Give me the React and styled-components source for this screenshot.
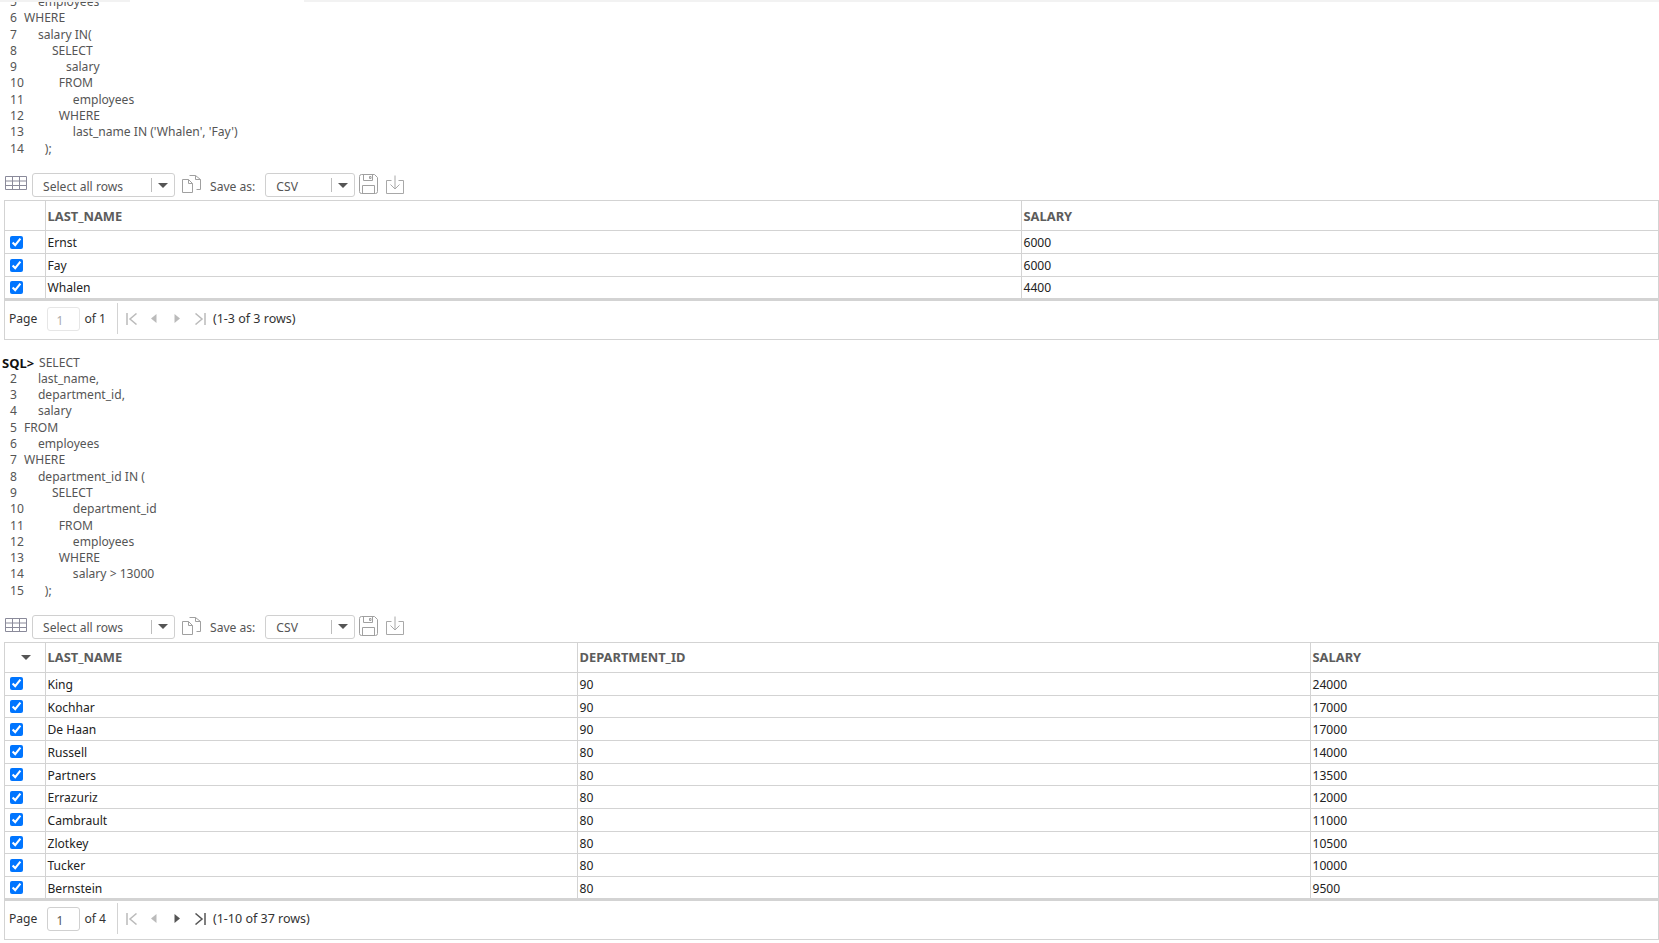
import React from "react";
import styled, { createGlobalStyle } from "styled-components";

const Global = createGlobalStyle`
html, body { margin:0; padding:0; background:#fff; overflow:hidden; }
body { font-family:"Noto Sans","Open Sans",sans-serif; font-size:12px; color:#222; }
`;

const Page = styled.div`
  position:relative;
  width:1659px;
  height:943px;
  overflow:hidden;
  box-sizing:border-box;
  &::before {
    content:"";
    position:absolute;
    top:0;
    left:0;
    right:0;
    height:2px;
    background:linear-gradient(90deg,#f2f2f2 130px,#fff 130px,#fff 304px,#f2f2f2 304px);
  }
`;
const Code = styled.div`
  margin-top:${(p) => p.$top}px;
  padding-left:10px;
  color:#555;
  font-size:12.1px;
  line-height:16.3px;
`;
const Line = styled.div`
  display:flex;
  white-space:pre;
  height:16.3px;
`;
const Prompt = styled.b`
  color:#111;
  font-size:13px;
  margin-left:-8px;
  width:37px;
`;
const Num = styled.span`
  margin-right:${(p) => 7 + p.$indent * 14}px;
`;
const Toolbar = styled.div`
  display:flex;
  align-items:center;
  height:24px;
  margin-top:${(p) => p.$top}px;
  padding-left:5px;
  color:#555;
  font-size:12.1px;
`;
const SelectBox = styled.div`
  display:flex;
  align-items:center;
  box-sizing:border-box;
  height:24px;
  width:${(p) => p.$w}px;
  margin-left:${(p) => p.$ml}px;
  padding-left:10px;
  border:1px solid #d0d0d0;
  border-radius:3px;
`;
const SelectText = styled.span`
  flex:1;
  padding-top:2px;
`;
const Caret = styled.span`
  display:flex;
  align-items:center;
  justify-content:center;
  width:22px;
  height:14px;
  border-left:1px solid #bdbdbd;
  &::after {
    content:"";
    border-left:5px solid transparent;
    border-right:5px solid transparent;
    border-top:5px solid #555;
  }
`;
const SaveLabel = styled.span`
  margin:0 10px 0 8px;
  padding-top:2px;
`;
const ToolIcon = styled.svg`
  display:block;
  margin-left:${(p) => p.$ml}px;
  margin-bottom:${(p) => p.$mb || 0}px;
  flex:none;
`;
const Grid = styled.div`
  margin:${(p) => p.$top}px 0 0 4px;
  border:1px solid #d3d3d3;
  box-sizing:border-box;
  width:1655px;
`;
const Table = styled.table`
  border-collapse:collapse;
  table-layout:fixed;
  width:100%;
  border-bottom:3px solid #d3d3d3;
`;
const Head = styled.th`
  height:29px;
  padding:0 0 0 2px;
  border-left:1px solid #d3d3d3;
  border-bottom:1px solid #d3d3d3;
  text-align:left;
  color:#5c5c5c;
  font-size:12.9px;
  font-weight:700;
  &:first-child { border-left:0; }
`;
const Cell = styled.td`
  height:22.7px;
  padding:1px 0 0 2px;
  box-sizing:border-box;
  border-left:1px solid #d3d3d3;
  border-bottom:1px solid #d3d3d3;
  color:#222;
  font-size:12.1px;
  line-height:17px;
  &:first-child { border-left:0; padding:0; text-align:center; }
  tr:last-child & { border-bottom:0; }
`;
const Check = styled.input`
  display:block;
  width:13px;
  height:13px;
  margin:0 0 0 5px;
  accent-color:#0075ff;
`;
const SortCaret = styled.span`
  display:block;
  width:0;
  margin-left:14px;
  border-left:5px solid transparent;
  border-right:5px solid transparent;
  border-top:5px solid #555;
`;
const Pager = styled.div`
  display:flex;
  align-items:center;
  box-sizing:border-box;
  height:38px;
  padding:0 0 2px 4px;
  color:#333;
  font-size:12.1px;
`;
const PageInput = styled.div`
  box-sizing:border-box;
  width:33px;
  height:24px;
  margin:0 4px 0 10px;
  padding:5px 0 0 8px;
  border:1px solid ${(p) => (p.$off ? "#e6e6e6" : "#d0d0d0")};
  border-radius:3px;
  color:${(p) => (p.$off ? "#aaa" : "#555")};
  font-size:12px;
  line-height:16px;
`;
const Sep = styled.span`
  width:1px;
  height:31px;
  margin:0 8px 0 ${(p) => p.$ml}px;
  background:#d3d3d3;
`;
const NavBtn = styled.svg`
  display:block;
  flex:none;
  margin-right:${(p) => p.$mr}px;
  fill:${(p) => (p.$line ? "none" : p.$on ? "#555" : "#bbb")};
  stroke:${(p) => (p.$on ? "#555" : "#bbb")};
`;
const RowsLabel = styled.span`
  font-size:12.5px;
`;

const Icons = {
  table: (
    <ToolIcon $ml={0} $mb={4} width="22" height="14" viewBox="0 0 22 14" fill="none" stroke="#8a8a9a">
      <path d="M.5.5h21v13H.5zM.5 5h21M.5 9.500h21M7.500.5v13M14.500.5v13" />
    </ToolIcon>
  ),
  copy: (
    <ToolIcon $ml={7} $mb={2} width="20" height="20" viewBox="0 0 20 20" fill="#fff" stroke="#a0a0a0">
      <path d="M7.500 1.500h6l5 4v10h-4M13.500 1.500v4h5" />
      <path d="M.5 5.500h6l4 4v9H.5zM6.500 5.500v4h4" />
    </ToolIcon>
  ),
  save: (
    <ToolIcon $ml={4} $mb={2} width="19" height="20" viewBox="0 0 19 20" fill="none" stroke="#a0a0a0">
      <path d="M.5 2.500a2 2 0 0 1 2-2h13l3 3v14a2 2 0 0 1-2 2h-14a2 2 0 0 1-2-2z" />
      <path d="M4.500.5v6h9v-6M10.500 2.500h1.500v2h-1.500zM3.500 19.500v-8h12v8" />
    </ToolIcon>
  ),
  download: (
    <ToolIcon $ml={8} $mb={2} width="18" height="19" viewBox="0 0 18 19" fill="none" stroke="#a8a8a8">
      <path d="M5.500 5.500H.5v13h17v-13h-5M9 .5v13M4.500 9.500 9 14l4.500-4.500" />
    </ToolIcon>
  ),
};

const First = ({ on }) => (
  <NavBtn $line $on={on} $mr={13} width="12" height="12" viewBox="0 0 12 12">
    <path d="M1 0v12M10.500 .5 4 6l6.500 5.500" strokeWidth="1.500" />
  </NavBtn>
);
const Prev = ({ on }) => (
  <NavBtn $on={on} $mr={17} width="6" height="9" viewBox="0 0 6 9">
    <path d="M5.500 0v9L0 4.500z" stroke="none" />
  </NavBtn>
);
const Next = ({ on }) => (
  <NavBtn $on={on} $mr={14} width="6" height="9" viewBox="0 0 6 9">
    <path d="M.5 0v9L6 4.500z" stroke="none" />
  </NavBtn>
);
const Last = ({ on }) => (
  <NavBtn $line $on={on} $mr={7} width="12" height="12" viewBox="0 0 12 12">
    <path d="M11 0v12M1.500 .5 8 6l-6.500 5.500" strokeWidth="1.500" />
  </NavBtn>
);

const Tools = ({ top }) => (
  <Toolbar $top={top}>
    {Icons.table}
    <SelectBox $w={143} $ml={5}>
      <SelectText>Select all rows</SelectText>
      <Caret />
    </SelectBox>
    {Icons.copy}
    <SaveLabel>Save as:</SaveLabel>
    <SelectBox $w={90} $ml={0}>
      <SelectText>CSV</SelectText>
      <Caret />
    </SelectBox>
    {Icons.save}
    {Icons.download}
  </Toolbar>
);

const query1 = [
  ["6", 0, "WHERE"],
  ["7", 1, "salary IN("],
  ["8", 2, "SELECT"],
  ["9", 3, "salary"],
  ["10", 2, "FROM"],
  ["11", 3, "employees"],
  ["12", 2, "WHERE"],
  ["13", 3, "last_name IN ('Whalen', 'Fay')"],
  ["14", 1, ");"],
];
const query2 = [
  ["2", 1, "last_name,"],
  ["3", 1, "department_id,"],
  ["4", 1, "salary"],
  ["5", 0, "FROM"],
  ["6", 1, "employees"],
  ["7", 0, "WHERE"],
  ["8", 1, "department_id IN ("],
  ["9", 2, "SELECT"],
  ["10", 3, "department_id"],
  ["11", 2, "FROM"],
  ["12", 3, "employees"],
  ["13", 2, "WHERE"],
  ["14", 3, "salary > 13000"],
  ["15", 1, ");"],
];
const rows1 = [
  ["Ernst", "6000"],
  ["Fay", "6000"],
  ["Whalen", "4400"],
];
const rows2 = [
  ["King", "90", "24000"],
  ["Kochhar", "90", "17000"],
  ["De Haan", "90", "17000"],
  ["Russell", "80", "14000"],
  ["Partners", "80", "13500"],
  ["Errazuriz", "80", "12000"],
  ["Cambrault", "80", "11000"],
  ["Zlotkey", "80", "10500"],
  ["Tucker", "80", "10000"],
  ["Bernstein", "80", "9500"],
];

const Result = ({ top, widths, heads, rows, sorted, page, pages, label }) => {
  const single = pages === 1;
  return (
    <Grid $top={top}>
      <Table>
        <colgroup>
          {widths.map((w, i) => (
            <col key={i} width={w} />
          ))}
        </colgroup>
        <thead>
          <tr>
            <Head>{sorted && <SortCaret />}</Head>
            {heads.map((h) => (
              <Head key={h}>{h}</Head>
            ))}
          </tr>
        </thead>
        <tbody>
          {rows.map((r) => (
            <tr key={r[0]}>
              <Cell>
                <Check type="checkbox" checked readOnly />
              </Cell>
              {r.map((v, i) => (
                <Cell key={i}>{v}</Cell>
              ))}
            </tr>
          ))}
        </tbody>
      </Table>
      <Pager>
        Page
        <PageInput $off={single}>{page}</PageInput>
        of {pages}
        <Sep $ml={11} />
        <First on={false} />
        <Prev on={false} />
        <Next on={!single} />
        <Last on={!single} />
        <RowsLabel>{label}</RowsLabel>
      </Pager>
    </Grid>
  );
};

const App = () => (
  <Page>
    <Global />
    <Code $top={-6}>
      <Line>
        <Num $indent={1}>5</Num>employees
      </Line>
      {query1.map(([n, ind, t]) => (
        <Line key={n}>
          <Num $indent={ind}>{n}</Num>
          {t}
        </Line>
      ))}
    </Code>
    <Tools top={16.5} />
    <Result
      top={3}
      widths={[40, 976, 637]}
      heads={["LAST_NAME", "SALARY"]}
      rows={rows1}
      page="1"
      pages={1}
      label="(1-3 of 3 rows)"
    />
    <Code $top={15}>
      <Line>
        <Prompt>SQL&gt;</Prompt>SELECT
      </Line>
      {query2.map(([n, ind, t]) => (
        <Line key={n}>
          <Num $indent={ind}>{n}</Num>
          {t}
        </Line>
      ))}
    </Code>
    <Tools top={16} />
    <Result
      top={3}
      widths={[40, 532, 733, 348]}
      heads={["LAST_NAME", "DEPARTMENT_ID", "SALARY"]}
      rows={rows2}
      sorted
      page="1"
      pages={4}
      label="(1-10 of 37 rows)"
    />
  </Page>
);

export default App;
